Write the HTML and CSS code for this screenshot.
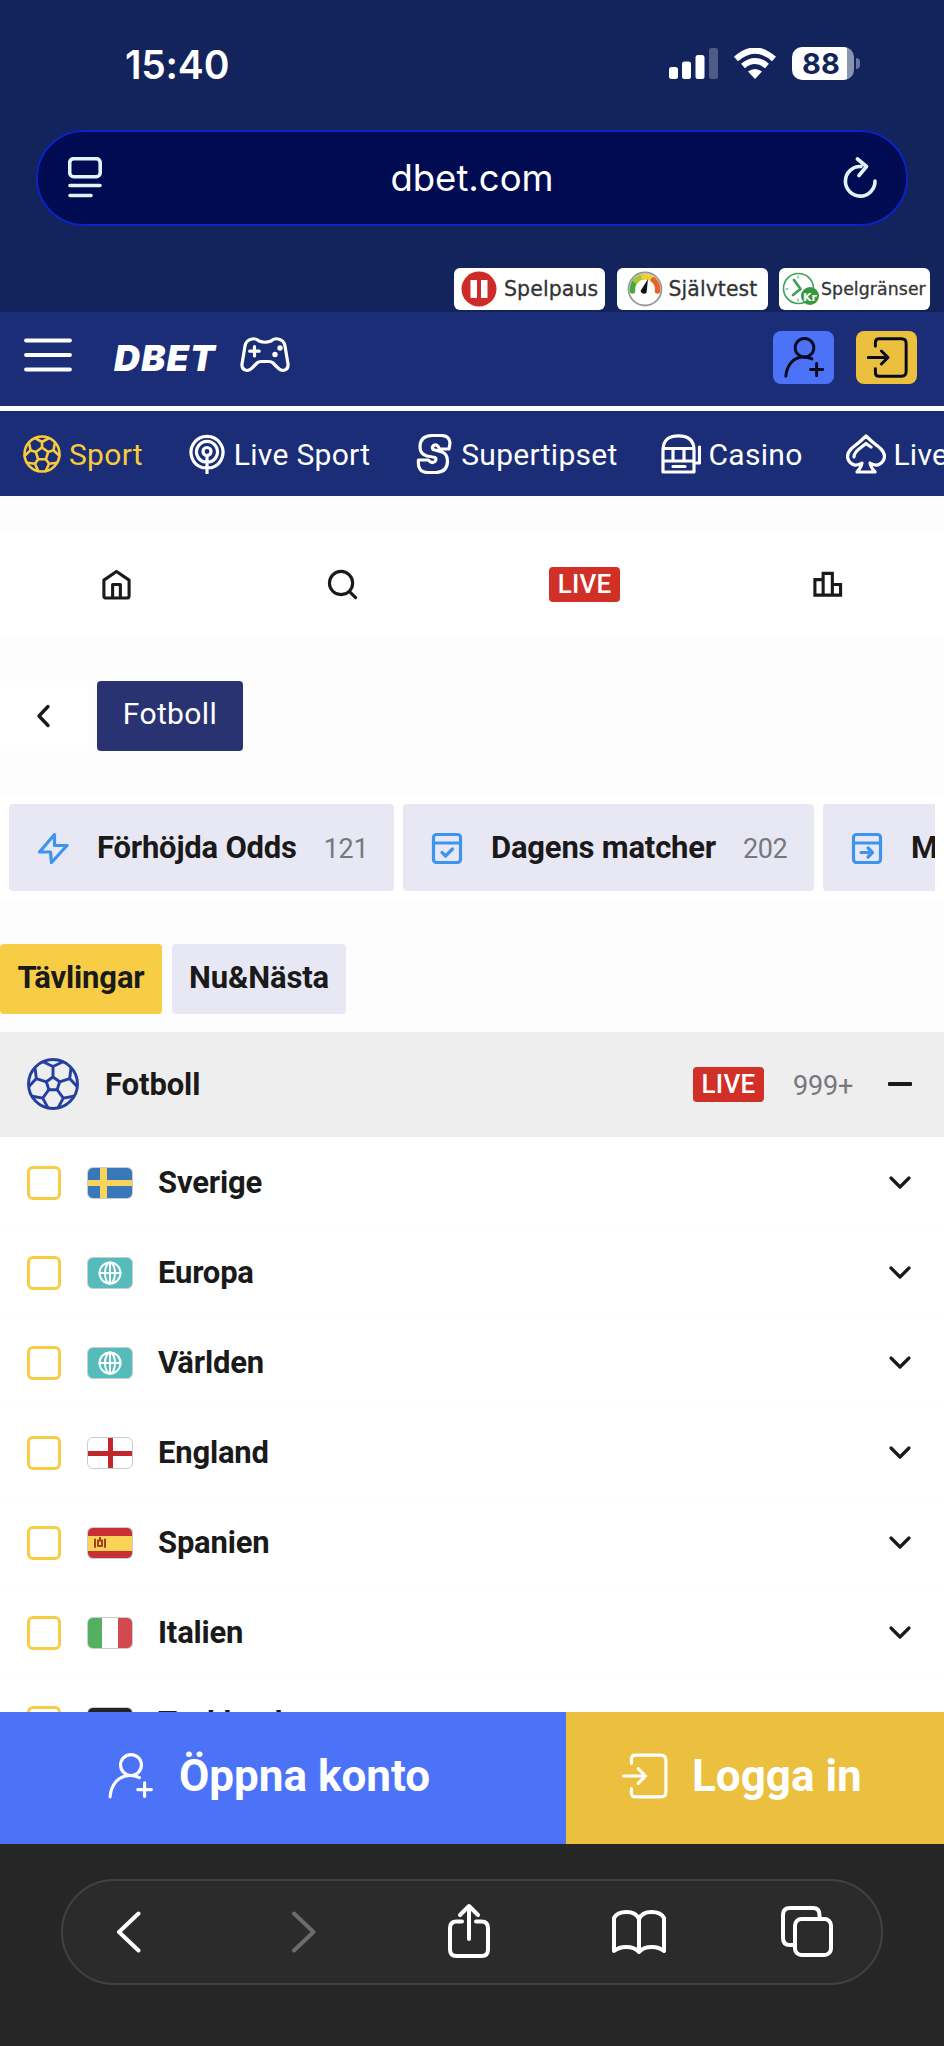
FILE: index.html
```
<!DOCTYPE html>
<html lang="sv">
<head>
    <meta charset="UTF-8">
    <meta name="viewport" content="width=device-width, initial-scale=1.0">
    <title>dbet.com</title>
    <link rel="stylesheet" href="styles.css">
</head>
<body>
    <!-- shared icons -->
    <svg class="sprite" width="0" height="0">
        <symbol id="i-user" viewBox="0 0 44 44">
            <circle cx="22" cy="11.5" r="10"/>
            <path d="M2 42C3 30 10 21.500 21 21.500Q26 21.500 30 23.500M35 28.500v13M28.500 35h13"/>
        </symbol>
        <symbol id="i-login" viewBox="0 0 44 44">
            <path d="M9 10V6Q9 2 13 2H37Q42 2 42 7V37Q42 42 37 42H13Q9 42 9 38V34M1.500 22H22M15.500 15L22.500 22L15.500 29"/>
        </symbol>
        <symbol id="i-down" viewBox="0 0 24 24"><path d="M3 7L12 16L21 7"/></symbol>
        <symbol id="i-globe" viewBox="0 0 24 24">
            <circle cx="12" cy="12" r="10.500"/><ellipse cx="12" cy="12" rx="5" ry="10.500"/><path d="M1.500 12H22.500M12 1.500V22.500"/>
        </symbol>
    </svg>

    <div class="phone">
        <div class="status">
            <span class="time">15:40</span>
            <div class="signals">
                <svg class="bars" viewBox="0 0 49 32"><rect x="0" y="19" width="9" height="12" rx="2.500"/><rect x="13" y="13.500" width="9" height="17.500" rx="2.500"/><rect x="26.500" y="7" width="9" height="24" rx="2.500"/><rect x="40" y="0" width="9" height="31" rx="2.500" opacity=".25"/></svg>
                <svg class="wifi" viewBox="0 0 44 32"><path d="M3 11Q22 -6 41 11M10 18Q22 8 34 18" fill="none" stroke="#fff" stroke-width="6" stroke-linecap="butt"/><path d="M15 23.500Q22 18.500 29 23.500L22 31Z"/></svg>
                <div class="battery"><span>88</span></div>
            </div>
        </div>

        <div class="address">
            <svg width="34" height="42" viewBox="0 0 34 42"><rect x="1.700" y="1.700" width="30.500" height="18" rx="4"/><path d="M2 28.500H32M2 38.500H23"/></svg>
            <span>dbet.com</span>
            <svg width="36" height="42" viewBox="0 0 36 42"><path d="M19 9.500A14.800 14.800 0 1 0 33 24M15.500 2L24.500 9.500L17 18.500"/></svg>
        </div>

        <div class="tools">
            <div class="tool">
                <svg width="36" height="36" viewBox="0 0 36 36"><circle cx="18" cy="18" r="17.500" fill="#cf2a2a"/><path d="M9.500 9H16V27H9.500ZM20 9H26.500V27H20Z" fill="#fff"/></svg>
                <span>Spelpaus</span>
            </div>
            <div class="tool test">
                <svg width="36" height="36" viewBox="0 0 36 36"><circle cx="18" cy="18" r="16.500" fill="#fff" stroke="#999" stroke-width="1.800"/><g fill="none" stroke-width="5.500"><path d="M5.500 20A12.500 12.500 0 0 1 9 9.500" stroke="#48a83e"/><path d="M9 9.500A12.500 12.500 0 0 1 17 5.800" stroke="#a9c934"/><path d="M17 5.800A12.500 12.500 0 0 1 26.500 9" stroke="#f1ce32"/><path d="M26.500 9A12.500 12.500 0 0 1 30.500 20" stroke="#e8622b"/></g><path d="M21 8L13.500 20Q15 24 19.500 22Z" fill="#111"/></svg>
                <span>Självtest</span>
            </div>
            <div class="tool limits">
                <svg width="38" height="36" viewBox="0 0 38 36"><circle cx="16.500" cy="17.500" r="15" fill="none" stroke="#3f9f5b" stroke-width="1.600"/><path d="M12 9L18.500 18L11 24" fill="none" stroke="#3f9f5b" stroke-width="2.800"/><path d="M16 5V7M4 18H6M16 28V30" stroke="#3f9f5b"/><circle cx="28" cy="25" r="9" fill="#36983f"/><text x="28" y="29.500" text-anchor="middle">Kr</text></svg>
                <span>Spelgränser</span>
            </div>
        </div>

        <header class="header">
            <svg class="menu" width="48" height="34" viewBox="0 0 48 34"><path d="M2 2.500H46M2 17H46M2 31.500H46"/></svg>
            <span class="logo">DBET</span>
            <svg class="pad" width="50" height="36" viewBox="0 0 50 36"><path d="M12 2Q16 1 19 4Q25 6.500 31 4Q34 1 38 2Q44 3 45 9L48 27Q48.500 33 43 33.500Q40 33.500 37 30L33 26Q31.500 24.500 29 24.500H21Q18.500 24.500 17 26L13 30Q10 33.500 7 33.500Q1.500 33 2 27L5 9Q6 3 12 2Z"/><path d="M14.500 9.500V19M9.700 14.200H19.200"/><circle cx="40" cy="11" r="2.700"/><circle cx="35" cy="17.500" r="2.700"/></svg>
            <button class="btn-user"><svg><use href="#i-user"/></svg></button>
            <button class="btn-login"><svg><use href="#i-login"/></svg></button>
        </header>

        <nav class="nav">
            <a class="active">
                <svg viewBox="-20 -20 40 40"><circle r="17.500"/><path d="M0-6.500L6.200-2L3.800 5.300H-3.800L-6.200-2Z"/><g id="arm-s"><path d="M0-6.500V-12L-7-16M0-12L7-16"/></g><use href="#arm-s" transform="rotate(72)"/><use href="#arm-s" transform="rotate(144)"/><use href="#arm-s" transform="rotate(216)"/><use href="#arm-s" transform="rotate(288)"/></svg>
                <span>Sport</span>
            </a>
            <a>
                <svg viewBox="0 0 40 40"><circle cx="20" cy="17.500" r="4"/><path d="M20 23V39M16 27.500A10.500 10.500 0 1 1 24 27.500M15 33.500A16 16 0 1 1 25 33.500M16 27.500L20 28.500L24 27.500M15 33.500L20 34L25 33.500"/></svg>
                <span>Live Sport</span>
            </a>
            <a>
                <svg viewBox="0 0 40 40"><path d="M36 9Q35.500 1.500 27 1.500H18Q6 2 6 13Q6 20 13 22Q16.500 22.500 21 23.500Q23 25 21 27.500Q17 30 14.500 26H4.500Q3 38.500 14 38.500H22Q33.500 38 33.500 27Q33.500 20 28 18L19 15.500Q17.500 13.500 19.500 11.500Q23.500 9.500 25.500 15H35Z"/></svg>
                <span>Supertipset</span>
            </a>
            <a>
                <svg viewBox="0 0 40 40"><path d="M2 38V16Q2 1.800 17.500 1.800Q33 1.800 33 16V38ZM2 14.500H33M2 27H33M12 15V27M23 15V27M12 32.500H24M33 29H38.500V13"/></svg>
                <span>Casino</span>
            </a>
            <a>
                <svg viewBox="0 0 40 40"><path d="M20 2Q26 8 34 14Q41 21 37 27Q32 34 24 29Q25 34 29 38H11Q15 34 16 29Q8 34 3 27Q-1 21 6 14Q14 8 20 2ZM8 23Q8 19 13 15L20 9.500L25 13"/></svg>
                <span>Live Casino</span>
            </a>
        </nav>

        <div class="shortcuts">
            <svg viewBox="0 0 32 32"><path d="M3 11.500L16 2.500L29 11.500V27.500Q29 30 26.500 30H5.500Q3 30 3 27.500ZM12 30V16H20V30"/></svg>
            <svg viewBox="0 0 32 32"><circle cx="14.500" cy="14.500" r="12"/><path d="M23 23L29.500 29.500"/></svg>
            <span class="live">LIVE</span>
            <svg viewBox="0 0 32 32"><path d="M3 11H11.500V27H3ZM11.500 4.500H21V27H11.500ZM21 16H29.500V27H21Z"/></svg>
        </div>

        <div class="crumbs">
            <div class="back"><svg width="24" height="24" viewBox="0 0 24 24"><path d="M16 2.500L7 12L16 21.500"/></svg></div>
            <span class="chip">Fotboll</span>
        </div>

        <div class="strip">
            <div class="cards">
                <div class="card"><svg viewBox="0 0 32 32"><path d="M17.500 2.500L2.500 20H13.500L14.500 30.500L30 13.500H17.500Z"/></svg><b>Förhöjda Odds</b><i>121</i></div>
                <div class="card wide"><svg viewBox="0 0 32 32"><rect x="2.500" y="2.500" width="27" height="28" rx="3"/><path d="M2.500 11H29.500M11 20.500L14.500 24L21.500 17"/></svg><b>Dagens matcher</b><i>202</i></div>
                <div class="card"><svg viewBox="0 0 32 32"><rect x="2.500" y="2.500" width="27" height="28" rx="3"/><path d="M2.500 11H29.500M10 20.500H21M17 16L21.500 20.500L17 25"/></svg><b>Morgondagens</b></div>
            </div>
        </div>

        <div class="tabs">
            <span class="tab on">Tävlingar</span>
            <span class="tab">Nu&amp;Nästa</span>
        </div>

        <div class="sport">
            <svg class="ball" width="52" height="52" viewBox="-26 -26 52 52"><circle r="24.500"/><path d="M0-7L6.700-2.200L4.100 5.700H-4.100L-6.700-2.200Z"/><g id="arm-l"><path d="M0-7V-17.500L-9.500-22M0-17.500L9.500-22"/></g><use href="#arm-l" transform="rotate(72)"/><use href="#arm-l" transform="rotate(144)"/><use href="#arm-l" transform="rotate(216)"/><use href="#arm-l" transform="rotate(288)"/></svg>
            <b>Fotboll</b>
            <span class="live">LIVE</span>
            <i>999+</i>
            <span class="minus"></span>
        </div>

        <div class="list">
            <div class="row"><span class="check"></span><span class="flag se"></span><b>Sverige</b><svg><use href="#i-down"/></svg></div>
            <div class="row"><span class="check"></span><span class="flag world"><svg><use href="#i-globe"/></svg></span><b>Europa</b><svg><use href="#i-down"/></svg></div>
            <div class="row"><span class="check"></span><span class="flag world"><svg><use href="#i-globe"/></svg></span><b>Världen</b><svg><use href="#i-down"/></svg></div>
            <div class="row"><span class="check"></span><span class="flag en"></span><b>England</b><svg><use href="#i-down"/></svg></div>
            <div class="row"><span class="check"></span><span class="flag es"><svg viewBox="0 0 12 11"><path d="M1 2.500V10M11 2.500V10M6 0V2M4 3.500H8V9H4Z"/></svg></span><b>Spanien</b><svg><use href="#i-down"/></svg></div>
            <div class="row"><span class="check"></span><span class="flag it"></span><b>Italien</b><svg><use href="#i-down"/></svg></div>
            <div class="row"><span class="check"></span><span class="flag de"></span><b>Tyskland</b><svg><use href="#i-down"/></svg></div>
        </div>

        <div class="cta">
            <a class="open"><svg><use href="#i-user"/></svg><span>Öppna konto</span></a>
            <a class="login"><svg><use href="#i-login"/></svg><span>Logga in</span></a>
        </div>

        <div class="browser">
            <div class="pill">
                <svg width="26" height="42" viewBox="0 0 26 42"><path d="M22.500 2.500L3 21L22.500 39.500"/></svg>
                <svg class="off" width="26" height="42" viewBox="0 0 26 42"><path d="M3 2.500L22.500 21L3 39.500"/></svg>
                <svg width="44" height="56" viewBox="0 0 44 56"><path d="M15 18.500H9.500Q3 18.500 3 25V46.500Q3 53 9.500 53H34.500Q41 53 41 46.500V25Q41 18.500 34.500 18.500H29M22 36V4M13 12L22 3L31 12"/></svg>
                <svg width="54" height="46" viewBox="0 0 54 46"><path d="M27 10Q24 3 14.500 3Q5 3 2 9V42Q7 38 14 38Q23 38 27 43Q31 38 40 38Q47 38 52 42V9Q49 3 39.500 3Q30 3 27 10V42"/></svg>
                <svg width="52" height="52" viewBox="0 0 52 52"><path d="M12 39H9Q2 39 2 32V9Q2 2 9 2H32Q38.500 2 38.500 9V11"/><rect x="14" y="13" width="36" height="36" rx="6.500"/></svg>
            </div>
        </div>
    </div>
</body>
</html>
```
FILE: styles.css
```
* { box-sizing: border-box; }
body { margin: 0; font-family: Roboto, sans-serif; color: #1a1a1a; background: #fdfdfd; }
svg { fill: none; stroke-linecap: round; stroke-linejoin: round; flex: none; display: block; }
i { font-style: normal; }
.sprite { position: absolute; }
.phone { width: 944px; height: 2046px; overflow: hidden; display: flex; flex-direction: column; }
.phone > div, .phone > header, .phone > nav { flex: none; }

/* iOS status bar + address bar */
.status { height: 130px; background: #13245c; display: flex; justify-content: space-between; align-items: flex-start; padding: 41px 84px 0 125px; font-family: Inter, sans-serif; color: #fff; }
.time { font-size: 39px; font-weight: 600; line-height: 48px; letter-spacing: -.2px; }
.signals { display: flex; gap: 15px; padding-top: 6px; }
.signals svg { fill: #fff; height: 32px; margin-top: 1px; }
.bars { width: 49px; }
.wifi { width: 44px; }
.battery { position: relative; width: 62px; height: 33px; border-radius: 10px; background: linear-gradient(90deg, #fff 55px, #8a93b0 55px); margin-right: 6px; font-size: 29px; font-weight: 700; line-height: 33px; color: #13245c; padding-left: 10px; }
.battery::after { content: ""; position: absolute; left: 64px; top: 11px; width: 4px; height: 11px; border-radius: 0 4px 4px 0; background: #6b769c; }
.address { background: #000b52; border: 2px solid #0a24c4; border-radius: 48px; display: flex; align-items: center; justify-content: space-between; padding: 0 28px 0 30px; color: #fff; font-family: Inter, sans-serif; font-size: 36.500px; }
.address svg { stroke: #e2f4fb; stroke-width: 3.6; }
.phone > .address { width: 872px; height: 96px; align-self: center; box-shadow: 0 0 0 200px #13245c; clip-path: inset(0 -36px -42px); }
.tools { height: 86px; background: #13245c; display: flex; justify-content: flex-end; align-items: flex-end; gap: 11.500px; padding: 0 14px 2px 0; z-index: 1; }
.tool { width: 151px; height: 42px; background: #fff; border-radius: 6px; display: flex; align-items: center; gap: 7px; padding-left: 7px; font-family: "DejaVu Sans", sans-serif; font-size: 20.500px; letter-spacing: .1px; color: #333; -webkit-text-stroke: .3px #333; }
.tool.test { padding-left: 10px; gap: 6px; font-size: 20.400px; }
.tool.limits { padding-left: 3px; gap: 1px; font-size: 17.300px; }
.limits text { font: bold 11px "DejaVu Sans", sans-serif; fill: #fff; -webkit-text-stroke: 0; }

/* site header */
.header { height: 94px; background: #1a2d76; display: flex; align-items: center; padding: 0 27px 3px 24px; z-index: 1; }
.menu, .pad { stroke: #fff; stroke-width: 3.8; position: relative; top: -3px; }
.pad { stroke-width: 3.2; margin-left: 18px; }
.pad circle { fill: #fff; stroke: none; }
.logo { margin-left: 42px; width: 108px; color: #fff; font: italic 900 36px/36px Inter, sans-serif; letter-spacing: 1.2px; }
.header button { width: 61px; height: 53px; border: 0; border-radius: 8px; padding: 0 0 0 11px; margin-right: 22px; }
.header button svg { width: 41px; height: 41px; stroke: #060b22; stroke-width: 3.2; }
.header .btn-user { margin-left: auto; background: #4c73f7; }
.header .btn-login { background: #ebc03f; margin-right: 0; }
.nav { height: 90px; background: #1a2d76; border-top: 5px solid #fff; display: flex; align-items: center; padding-left: 22px; overflow: hidden; z-index: 1; }
.nav a { display: flex; align-items: center; flex: none; gap: 7px; margin-right: 43.800px; color: #fff; font-size: 30px; letter-spacing: .3px; white-space: nowrap; }
.nav span { padding-top: 2px; }
.nav svg { width: 40px; height: 40px; stroke: #fff; stroke-width: 3.2; }
.nav .active { color: #f7cb3c; }
.nav .active svg { stroke: #f7cb3c; stroke-width: 2.6; }

/* shortcuts */
.shortcuts { height: 102px; margin-top: 37px; background: #fff; display: flex; align-items: center; padding: 0 101px; }
.shortcuts svg { width: 31px; height: 31px; stroke: #1a1a1a; stroke-width: 3.2; }
.shortcuts svg:nth-child(2) { margin-left: 195px; }
.shortcuts .live { margin-left: 191px; }
.shortcuts svg:last-child { margin-left: auto; stroke-linejoin: miter; }
.live { width: 71px; height: 35px; border-radius: 4px; background: #d03026; color: #fff; font-size: 26px; font-weight: 500; line-height: 35px; text-align: center; letter-spacing: .2px; }
.crumbs { height: 70px; margin-top: 46px; display: flex; gap: 9px; }
.back { width: 88px; background: #fff; display: flex; align-items: center; padding-left: 32px; }
.back svg { stroke: #1a1a1a; stroke-width: 3.4; }
.chip { width: 146px; height: 70px; border-radius: 4px; background: #2a3372; color: #fff; font-size: 30px; letter-spacing: .4px; line-height: 66px; text-align: center; }

.strip { margin-top: 44px; height: 105px; padding: 9px; background: #fff; }
.cards { display: flex; gap: 9px; overflow: hidden; }
.card { flex: none; width: 385px; height: 87px; border-radius: 4px; background: #e8e8f4; display: flex; align-items: center; padding-left: 28px; }
.card.wide { width: 411px; }
.card svg { width: 32px; height: 32px; stroke: #3d94ee; stroke-width: 3.2; }
.card b { margin-left: 28px; font-size: 31px; letter-spacing: -.2px; }
.card i { margin: 2px 0 0 27px; font-size: 27px; color: #77777f; letter-spacing: -.4px; }
.tabs { margin-top: 44px; height: 70px; display: flex; gap: 10px; }
.tab { width: 174px; border-radius: 4px; background: #e8e8f4; font-size: 31px; font-weight: 700; letter-spacing: -.15px; line-height: 67px; text-align: center; }
.tab.on { width: 162px; background: #f8cd46; }

/* competitions */
.sport { height: 105px; margin-top: 18px; background: #eee; display: flex; align-items: center; padding: 0 32px 1px 27px; }
.ball { stroke: #2340a0; stroke-width: 2.9; }
.sport b { margin-left: 26px; font-size: 31px; letter-spacing: -.1px; }
.sport .live { margin-left: auto; }
.sport i { margin: 3px 35px 0 29px; font-size: 27px; color: #77777f; letter-spacing: -.2px; }
.minus { width: 24px; height: 4px; border-radius: 1px; background: #1a1a1a; }
.list { height: 575px; overflow: hidden; background: #fff; padding-top: 1px; }
.row { height: 90px; display: flex; align-items: center; padding: 0 32px 0 27px; border-bottom: 1px solid #fcfcfc; }
.row b { margin: 0 auto 0 25px; font-size: 31px; letter-spacing: -.2px; }
.row > svg { width: 24px; height: 24px; stroke: #1a1a1a; stroke-width: 3.200; }
.check { width: 34px; height: 34px; border: 3px solid #f8cd46; border-radius: 6px; }
.flag { width: 46px; height: 32px; margin-left: 26px; border: 1px solid #c9cdd0; border-radius: 6px; }
.se { background: linear-gradient(90deg, transparent 12px, #f8d45c 12px 19px, transparent 19px), linear-gradient(#3678b8 12px, #f8d45c 12px 18px, #3678b8 18px); }
.world { background: #56bcbb; display: flex; align-items: center; justify-content: center; }
.world svg { width: 24px; height: 24px; stroke: #fff; stroke-width: 2; }
.en { background: linear-gradient(90deg, transparent 20px, #c0282c 20px 25px, transparent 25px), linear-gradient(#fff 13px, #c0282c 13px 18px, #fff 18px); }
.es { background: linear-gradient(#c93034 8px, #f9d456 8px 23px, #c93034 23px); padding: 9px 0 0 6px; }
.es svg { width: 12px; height: 11px; stroke: #a63c20; stroke-width: 2; }
.it { background: linear-gradient(90deg, #52b060 14px, #fff 14px 30px, #d24950 30px); }
.de { background: linear-gradient(#222 10px, #d22 10px 20px, #fc3 20px); }

/* account buttons */
.cta { height: 132px; display: flex; color: #fff; font-size: 44px; font-weight: 700; }
.cta a { display: flex; align-items: center; padding-bottom: 4px; }
.cta svg { width: 46px; height: 46px; stroke: #fff; stroke-width: 3; }
.cta .open { width: 566px; background: #4c73f7; padding-left: 108px; gap: 25px; }
.cta .login { width: 378px; background: #ebc03f; padding-left: 56px; gap: 24px; }

/* Safari toolbar */
.browser { height: 202px; background: #262626; padding: 35px 61px 0; }
.pill { width: 822px; height: 106px; border: 2px solid #414141; border-radius: 54px; background: #2b2b2b; display: flex; align-items: center; padding: 0 48px 0 53px; }
.pill svg { stroke: #fff; stroke-width: 4; }
.pill .off { stroke: #6c6c6e; margin-left: 149px; }
.pill svg:nth-child(3) { margin-left: 130px; margin-top: -3px; }
.pill svg:nth-child(4) { margin-left: 121px; }
.pill svg:nth-child(5) { margin-left: auto; }
```
